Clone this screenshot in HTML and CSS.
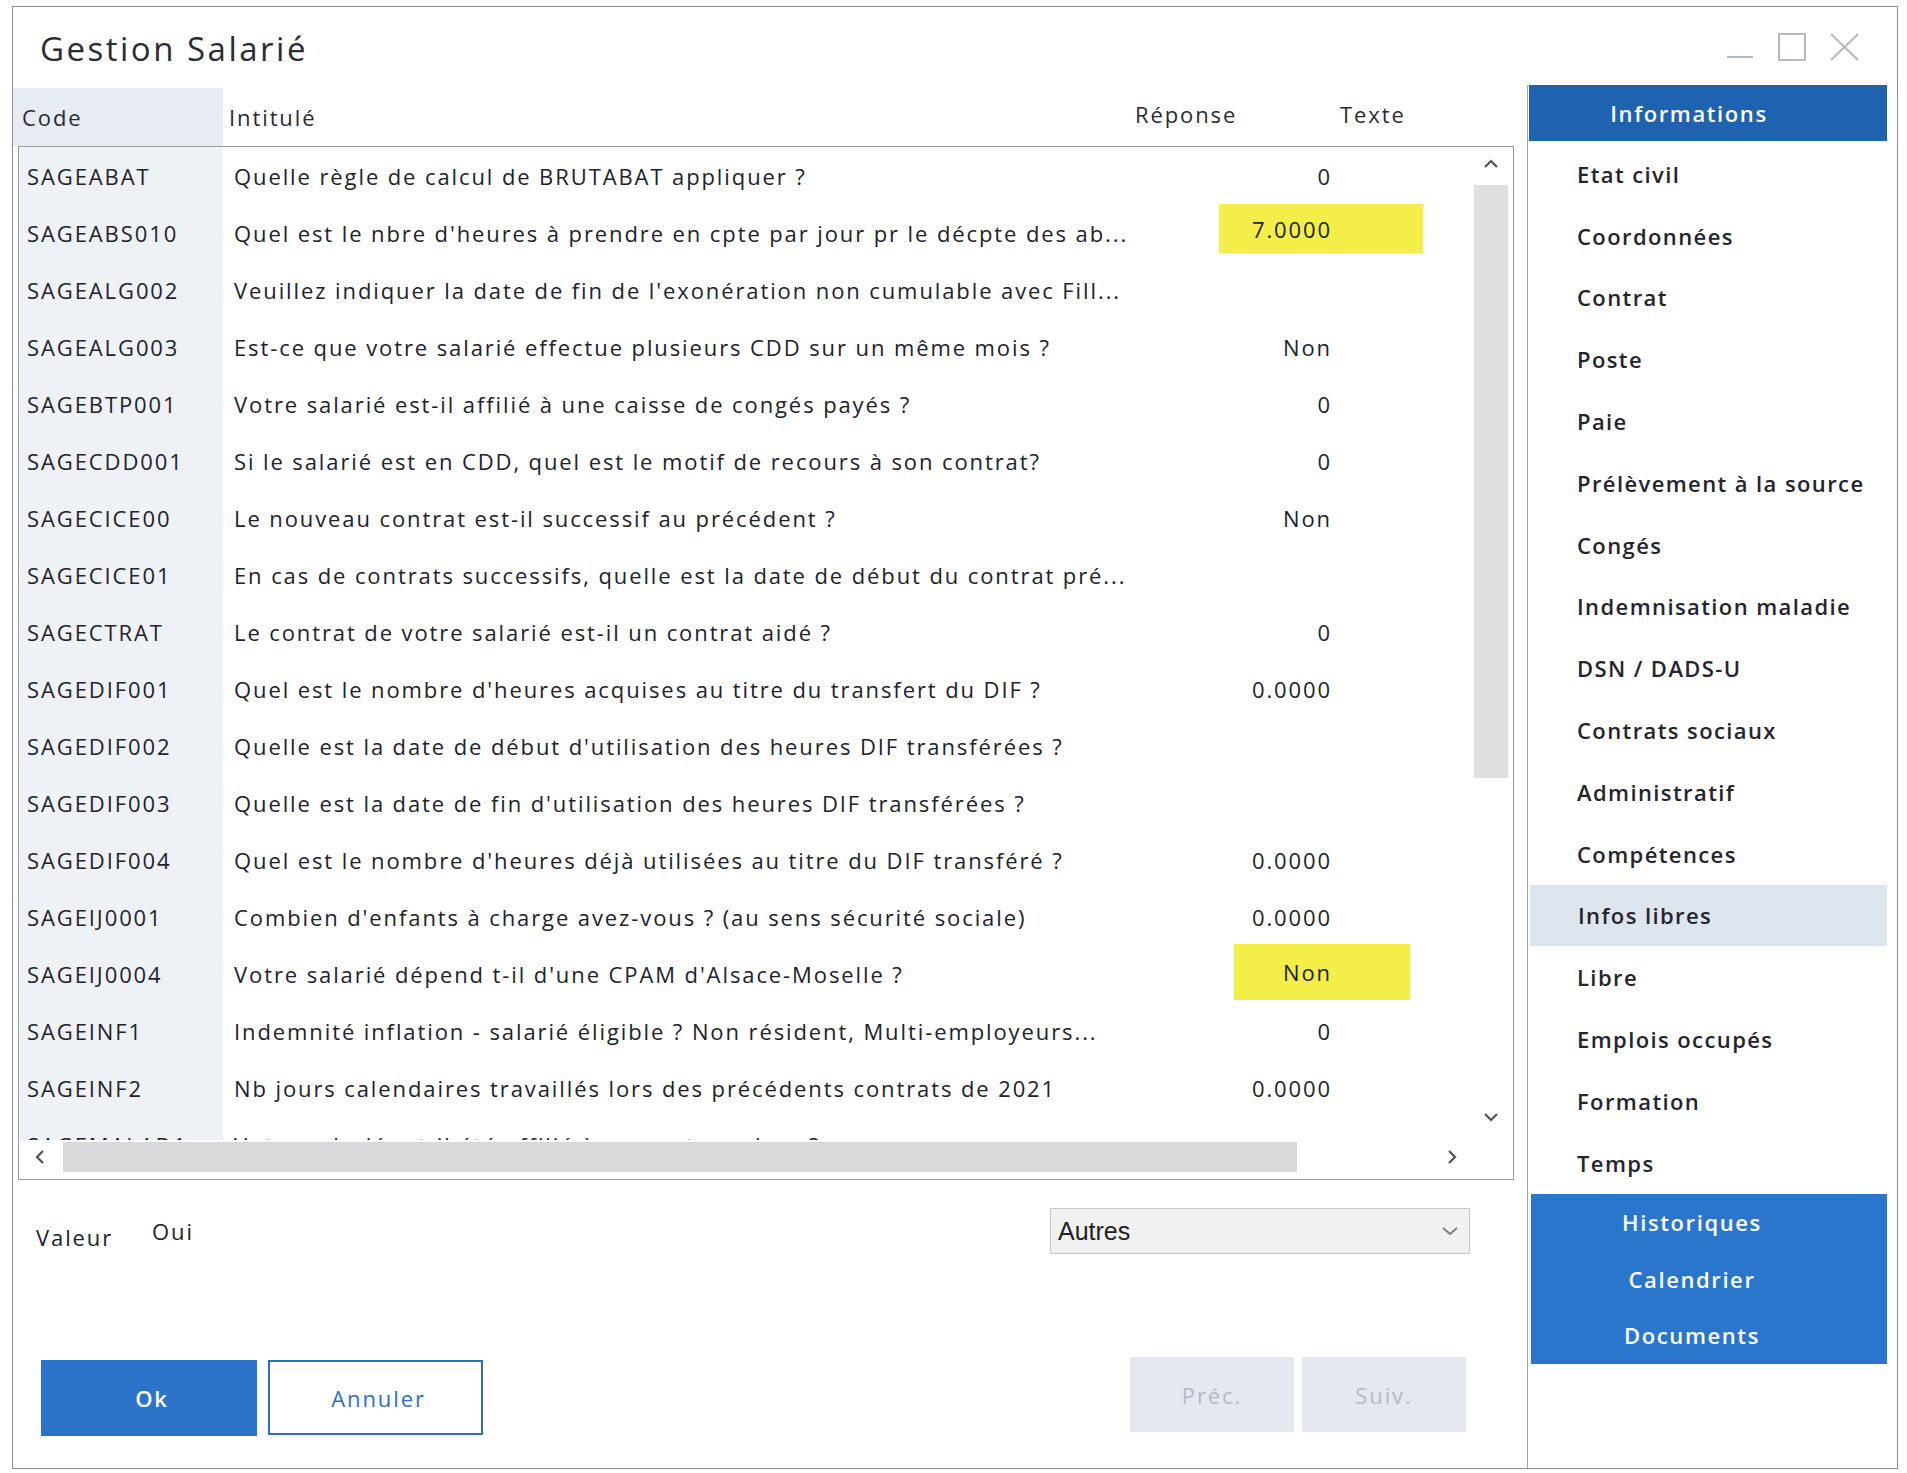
FILE: index.html
```html
<!DOCTYPE html>
<html lang="fr">
<head>
<meta charset="utf-8">
<title>Gestion Salarié</title>
<link rel="stylesheet" href="styles.css">
</head>
<body>
<div class="window">
  <div class="titlebar">
    <h1 class="title">Gestion Salarié</h1>
    <svg class="winctl" width="132" height="30" viewBox="0 0 132 30">
      <line x1="0" y1="25" x2="26" y2="25" stroke="#b4b9c2" stroke-width="2"/>
      <rect x="52" y="2" width="26" height="26" fill="none" stroke="#b4b9c2" stroke-width="2"/>
      <line x1="104" y1="2" x2="131" y2="28" stroke="#b4b9c2" stroke-width="2"/>
      <line x1="131" y1="2" x2="104" y2="28" stroke="#b4b9c2" stroke-width="2"/>
    </svg>
  </div>
  <div class="content">
    <div class="main">
      <div class="colhead">
        <div class="ch ch-code">Code</div>
        <div class="ch ch-int">Intitulé</div>
        <div class="ch ch-rep">Réponse</div>
        <div class="ch ch-txt">Texte</div>
      </div>
      <div class="grid">
        <div class="grid-top">
          <div class="rows">
            <div class="row"><div class="c-code">SAGEABAT</div><div class="c-int">Quelle règle de calcul de BRUTABAT appliquer ?</div><div class="c-rep">0</div><div class="c-txt"></div></div>
            <div class="row"><div class="c-code">SAGEABS010</div><div class="c-int">Quel est le nbre d'heures à prendre en cpte par jour pr le décpte des ab...</div><div class="c-rep"><span class="hl hl-a">7.0000</span></div><div class="c-txt"></div></div>
            <div class="row"><div class="c-code">SAGEALG002</div><div class="c-int">Veuillez indiquer la date de fin de l'exonération non cumulable avec Fill...</div><div class="c-rep"></div><div class="c-txt"></div></div>
            <div class="row"><div class="c-code">SAGEALG003</div><div class="c-int">Est-ce que votre salarié effectue plusieurs CDD sur un même mois ?</div><div class="c-rep">Non</div><div class="c-txt"></div></div>
            <div class="row"><div class="c-code">SAGEBTP001</div><div class="c-int">Votre salarié est-il affilié à une caisse de congés payés ?</div><div class="c-rep">0</div><div class="c-txt"></div></div>
            <div class="row"><div class="c-code">SAGECDD001</div><div class="c-int">Si le salarié est en CDD, quel est le motif de recours à son contrat?</div><div class="c-rep">0</div><div class="c-txt"></div></div>
            <div class="row"><div class="c-code">SAGECICE00</div><div class="c-int">Le nouveau contrat est-il successif au précédent ?</div><div class="c-rep">Non</div><div class="c-txt"></div></div>
            <div class="row"><div class="c-code">SAGECICE01</div><div class="c-int">En cas de contrats successifs, quelle est la date de début du contrat pré...</div><div class="c-rep"></div><div class="c-txt"></div></div>
            <div class="row"><div class="c-code">SAGECTRAT</div><div class="c-int">Le contrat de votre salarié est-il un contrat aidé ?</div><div class="c-rep">0</div><div class="c-txt"></div></div>
            <div class="row"><div class="c-code">SAGEDIF001</div><div class="c-int">Quel est le nombre d'heures acquises au titre du transfert du DIF ?</div><div class="c-rep">0.0000</div><div class="c-txt"></div></div>
            <div class="row"><div class="c-code">SAGEDIF002</div><div class="c-int">Quelle est la date de début d'utilisation des heures DIF transférées ?</div><div class="c-rep"></div><div class="c-txt"></div></div>
            <div class="row"><div class="c-code">SAGEDIF003</div><div class="c-int">Quelle est la date de fin d'utilisation des heures DIF transférées ?</div><div class="c-rep"></div><div class="c-txt"></div></div>
            <div class="row"><div class="c-code">SAGEDIF004</div><div class="c-int">Quel est le nombre d'heures déjà utilisées au titre du DIF transféré ?</div><div class="c-rep">0.0000</div><div class="c-txt"></div></div>
            <div class="row"><div class="c-code">SAGEIJ0001</div><div class="c-int">Combien d'enfants à charge avez-vous ? (au sens sécurité sociale)</div><div class="c-rep">0.0000</div><div class="c-txt"></div></div>
            <div class="row"><div class="c-code">SAGEIJ0004</div><div class="c-int">Votre salarié dépend t-il d'une CPAM d'Alsace-Moselle ?</div><div class="c-rep"><span class="hl hl-b">Non</span></div><div class="c-txt"></div></div>
            <div class="row"><div class="c-code">SAGEINF1</div><div class="c-int">Indemnité inflation - salarié éligible ? Non résident, Multi-employeurs...</div><div class="c-rep">0</div><div class="c-txt"></div></div>
            <div class="row"><div class="c-code">SAGEINF2</div><div class="c-int">Nb jours calendaires travaillés lors des précédents contrats de 2021</div><div class="c-rep">0.0000</div><div class="c-txt"></div></div>
            <div class="row"><div class="c-code">SAGEMALAD1</div><div class="c-int">Votre salarié a-t-il été affilié à une autre caisse ?</div><div class="c-rep">-</div><div class="c-txt"></div></div>
          </div>
          <div class="vscroll">
            <svg class="arrow" width="16" height="10" viewBox="0 0 16 10"><polyline points="2,8 8,2 14,8" fill="none" stroke="#505058" stroke-width="2.2"/></svg>
            <div class="vthumb"></div>
            <svg class="arrow arrow-down" width="16" height="10" viewBox="0 0 16 10"><polyline points="2,2 8,8 14,2" fill="none" stroke="#505058" stroke-width="2.2"/></svg>
          </div>
        </div>
        <div class="hscroll">
          <div class="hbtn"><svg width="10" height="16" viewBox="0 0 10 16"><polyline points="8,2 2,8 8,14" fill="none" stroke="#505058" stroke-width="2.2"/></svg></div>
          <div class="hthumb"></div>
          <div class="hspace"></div>
          <div class="hbtn hbtn-r"><svg width="10" height="16" viewBox="0 0 10 16"><polyline points="2,2 8,8 2,14" fill="none" stroke="#505058" stroke-width="2.2"/></svg></div>
        </div>
      </div>
      <div class="valrow">
        <div class="val-lbl">Valeur</div>
        <div class="val-val">Oui</div>
        <div class="select">
          <span>Autres</span>
          <svg width="18" height="10" viewBox="0 0 18 10"><polyline points="2,2 9,8 16,2" fill="none" stroke="#7a7a80" stroke-width="1.8"/></svg>
        </div>
      </div>
      <div class="btnrow">
        <div class="btn btn-ok">Ok</div>
        <div class="btn btn-cancel">Annuler</div>
        <div class="btn btn-dis btn-prev">Préc.</div>
        <div class="btn btn-dis btn-next">Suiv.</div>
      </div>
    </div>
    <aside class="panel">
      <div class="panel-head">Informations</div>
      <ul class="menu">
        <li>Etat civil</li>
        <li>Coordonnées</li>
        <li>Contrat</li>
        <li>Poste</li>
        <li>Paie</li>
        <li>Prélèvement à la source</li>
        <li>Congés</li>
        <li>Indemnisation maladie</li>
        <li>DSN / DADS-U</li>
        <li>Contrats sociaux</li>
        <li>Administratif</li>
        <li>Compétences</li>
        <li class="active">Infos libres</li>
        <li>Libre</li>
        <li>Emplois occupés</li>
        <li>Formation</li>
        <li>Temps</li>
      </ul>
      <div class="bluebox">
        <div class="bb-item">Historiques</div>
        <div class="bb-item">Calendrier</div>
        <div class="bb-item">Documents</div>
      </div>
    </aside>
  </div>
</div>
</body>
</html>
```

FILE: styles.css
```css
* { box-sizing: border-box; }
html, body { margin: 0; padding: 0; background: #ffffff; }
body {
  font-family: "Open Sans", "Noto Sans", "DejaVu Sans", sans-serif;
  color: #22222b;
  width: 1907px;
  height: 1473px;
  overflow: hidden;
}
.window {
  margin: 6px 0 0 12px;
  width: 1886px;
  height: 1463px;
  border: 1px solid #8e8e8e;
  background: #fff;
  display: flex;
  flex-direction: column;
}
.titlebar {
  height: 78px;
  flex: none;
  display: flex;
  align-items: center;
  padding: 4px 38px 0 27px;
}
.title {
  margin: 0;
  font-weight: 400;
  font-size: 33px;
  letter-spacing: 2.5px;
  color: #2c2c33;
  flex: 1;
}
.winctl { flex: none; margin-bottom: 2px; }
.content {
  flex: 1;
  display: flex;
  min-height: 0;
}
.main {
  width: 1514px;
  flex: none;
  padding-top: 3px;
}
.colhead {
  height: 58px;
  display: flex;
  align-items: center;
  font-size: 22px;
  letter-spacing: 1.9px;
  color: #2a2a32;
}
.ch-code {
  width: 210px;
  height: 100%;
  display: flex;
  align-items: center;
  padding-left: 9px;
  background: #e7ecf2;
}
.ch-int { width: 912px; padding-left: 6px; }
.ch-rep { width: 205px; padding-bottom: 6px; }
.ch-txt { padding-bottom: 6px; }
.grid {
  margin-left: 5px;
  width: 1496px;
  height: 1034px;
  border: 1px solid #9c9c9c;
  display: flex;
  flex-direction: column;
}
.grid-top {
  height: 993px;
  display: flex;
  flex: none;
}
.rows {
  flex: 1;
  overflow: hidden;
  background: linear-gradient(to right, #eef2f7 0, #eef2f7 204px, #fff 204px);
}
.row {
  height: 57px;
  display: flex;
  align-items: center;
  font-size: 22px;
  letter-spacing: 1.9px;
  white-space: nowrap;
}
.c-code { width: 204px; padding-left: 8px; flex: none; }
.c-int { width: 917px; padding-left: 11px; flex: none; overflow: hidden; }
.c-rep {
  width: 192px;
  flex: none;
  align-self: stretch;
  display: flex;
  align-items: center;
  justify-content: flex-end;
  margin-right: -2px;
}
.c-txt { flex: 1; }
.hl {
  background: #f3ee48;
  display: flex;
  align-items: center;
  justify-content: flex-end;
  align-self: flex-start;
  flex: none;
}
.hl-a { width: 204px; height: 49px; padding-right: 91px; margin-right: -91px; }
.hl-b { width: 176px; height: 56px; padding-right: 78px; margin-right: -78px; margin-top: -1px; }
.vscroll {
  width: 42px;
  flex: none;
  display: flex;
  flex-direction: column;
  align-items: center;
  padding: 12px 4px 18px 1px;
}
.arrow { flex: none; }
.vthumb {
  width: 34px;
  height: 593px;
  margin-top: 16px;
  background: #dfdfe1;
}
.arrow-down { margin-top: auto; }
.hscroll {
  height: 34px;
  flex: none;
  display: flex;
  align-items: stretch;
  width: 1452px;
}
.hbtn {
  width: 44px;
  display: flex;
  align-items: center;
  justify-content: center;
  padding-right: 3px;
}
.hthumb { width: 1234px; background: #d9d9db; margin: 2px 0; }
.hspace { flex: 1; }
.hbtn-r { width: 38px; padding-right: 0; }
.valrow {
  margin-top: 28px;
  height: 46px;
  display: flex;
  align-items: center;
  font-size: 22px;
  letter-spacing: 1.9px;
}
.val-lbl { width: 139px; padding-left: 23px; margin-top: 12px; }
.val-val { width: 898px; }
.select {
  width: 420px;
  height: 46px;
  border: 1px solid #c8c8cc;
  background: #f1f1f2;
  display: flex;
  align-items: center;
  justify-content: space-between;
  padding: 0 10px 0 7px;
  font-family: "Liberation Sans", Arial, sans-serif;
  font-size: 25px;
  letter-spacing: 0;
  color: #222;
}
.btnrow {
  margin-top: 106px;
  height: 76px;
  display: flex;
  align-items: flex-start;
}
.btn {
  display: flex;
  align-items: center;
  justify-content: center;
  font-size: 22px;
  letter-spacing: 1.9px;
  flex: none;
}
.btn-ok {
  margin-left: 28px;
  width: 216px;
  height: 76px;
  background: #2c74c9;
  color: #fff;
  font-weight: 600;
  padding-left: 6px;
}
.btn-cancel {
  margin-left: 11px;
  width: 215px;
  height: 75px;
  border: 2px solid #2c6fbf;
  color: #2c6fbf;
  padding-left: 6px;
}
.btn-dis {
  width: 164px;
  height: 75px;
  margin-top: -3px;
  background: #e4e8ef;
  color: #b4bac4;
}
.btn-prev { margin-left: 647px; }
.btn-next { margin-left: 8px; }
.panel {
  flex: 1;
  border-left: 1px solid #a5a5a5;
  padding: 0 10px 0 1px;
  display: flex;
  flex-direction: column;
}
.panel-head {
  height: 56px;
  background: #1e62b0;
  color: #fff;
  font-size: 22px;
  font-weight: 600;
  display: flex;
  align-items: center;
  justify-content: center;
  padding-right: 38px;
  letter-spacing: 1.6px;
}
.menu {
  list-style: none;
  margin: 2px 0 0;
  padding: 0;
}
.menu li {
  height: 61.8px;
  display: flex;
  align-items: center;
  padding-left: 48px;
  font-size: 22px;
  font-weight: 600;
  letter-spacing: 1.4px;
  color: #24242e;
}
.menu li.active { background: #dde5ef; margin-left: 1px; }
.bluebox {
  height: 170px;
  background: #2a76cc;
  margin-left: 2px;
  display: flex;
  flex-direction: column;
}
.bb-item {
  flex: 1;
  display: flex;
  align-items: center;
  justify-content: center;
  padding-right: 34px;
  color: #fff;
  font-size: 22px;
  font-weight: 600;
  letter-spacing: 1.6px;
}
```
